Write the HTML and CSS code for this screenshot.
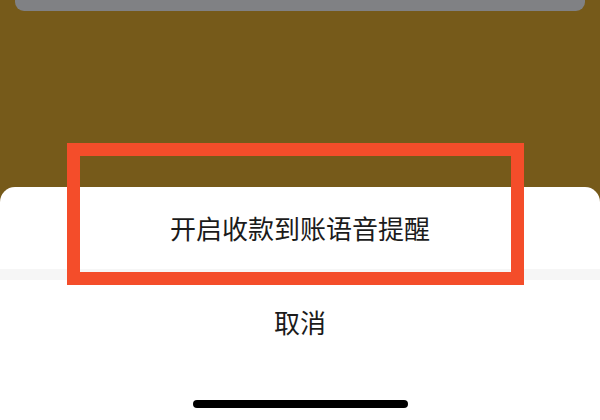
FILE: index.html
```html
<!DOCTYPE html>
<html lang="zh-CN">
<head>
<meta charset="utf-8">
<title>收款到账语音提醒</title>
<link rel="stylesheet" href="styles.css">
</head>
<body>
<div class="screen">
  <div class="backdrop">
    <div class="top-card"></div>
  </div>
  <div class="sheet">
    <div class="option">开启收款到账语音提醒</div>
    <div class="gap"></div>
    <div class="option cancel">取消</div>
    <div class="home-area"><div class="home-indicator"></div></div>
  </div>
  <div class="highlight"></div>
</div>
</body>
</html>
```

FILE: styles.css
```css
html, body {
  margin: 0;
  padding: 0;
}
body {
  width: 600px;
  height: 420px;
  overflow: hidden;
  background: #765a1a;
  font-family: "Noto Sans CJK SC", "Noto Sans", sans-serif;
}
.screen {
  position: relative;
  width: 600px;
  height: 420px;
  display: flex;
  flex-direction: column;
}
.backdrop {
  height: 187px;
  flex: none;
  padding: 0 15px;
  box-sizing: border-box;
}
.top-card {
  height: 11px;
  background: #808184;
  border-radius: 0 0 9px 9px;
}
.sheet {
  flex: 1;
  background: #ffffff;
  border-radius: 15px 15px 0 0;
  display: flex;
  flex-direction: column;
}
.option {
  height: 82px;
  display: flex;
  align-items: center;
  justify-content: center;
  font-size: 26px;
  color: #1b1b1b;
  line-height: 1;
}
.gap {
  height: 11px;
  background: #f6f6f6;
}
.cancel {
  height: 84px;
}
.home-area {
  flex: 1;
  display: flex;
  justify-content: center;
  padding-top: 36px;
  box-sizing: border-box;
}
.home-indicator {
  width: 215px;
  height: 8px;
  border-radius: 4px;
  background: #000000;
}
.highlight {
  position: absolute;
  left: 67px;
  top: 143px;
  width: 457px;
  height: 142px;
  box-sizing: border-box;
  border: 13px solid #f44d2a;
}
```
